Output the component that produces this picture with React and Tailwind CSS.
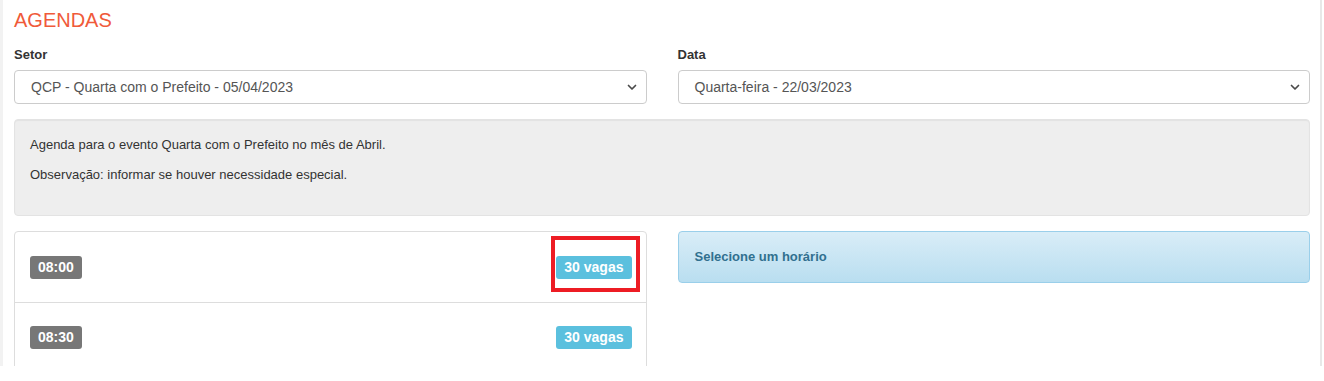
import React from 'react';

const ChevronDown = () => (
    <svg width="10" height="7" viewBox="0 0 10 7" className="shrink-0">
        <path d="M1.5 1.5 L5 5 L8.5 1.5" fill="none" stroke="#4a4a4a" strokeWidth="1.7" strokeLinecap="round" strokeLinejoin="round" />
    </svg>
);

const FakeSelect = ({ value }) => (
    <div className="h-[34px] flex items-center justify-between pl-[16px] pr-[9px] bg-white border border-[#cccccc] rounded-[4px] text-[14px] text-[#555555]">
        <span>{value}</span>
        <ChevronDown />
    </div>
);

const Field = ({ label, value }) => (
    <div className="flex flex-col">
        <label className="text-[13px] font-bold text-[#333333] leading-[18px] mb-[6px]">{label}</label>
        <FakeSelect value={value} />
    </div>
);

const slots = [
    { time: '08:00', vagas: 30, highlight: true },
    { time: '08:30', vagas: 30 },
];

export default function App() {
    return (
        <div className="w-[1324px] h-[381px] bg-white overflow-hidden" style={{ fontFamily: '"Liberation Sans", Arial, sans-serif' }}>
            <div className="h-[366px] flex overflow-hidden">
                <div className="w-[3px] bg-[#f2f2f2] shrink-0" />
                <div className="flex-1 pl-[11px] pr-[10px] overflow-hidden">
                    <h1 className="text-[20px] leading-[22px] text-[#f05a3a] mt-[9px] mb-[15px]">AGENDAS</h1>

                    <div className="grid grid-cols-2 gap-[31px]">
                        <Field label="Setor" value="QCP - Quarta com o Prefeito - 05/04/2023" />
                        <Field label="Data" value="Quarta-feira - 22/03/2023" />
                    </div>

                    {/* Info well */}
                    <div className="mt-[15px] bg-[#eeeeee] border border-[#e3e3e3] rounded-[4px] pt-[15px] pb-[20px] px-[15px] text-[13px] leading-[20px] text-[#333333] shadow-[inset_0_1px_1px_rgba(0,0,0,0.05)]">
                        <p className="mb-[10px]">Agenda para o evento Quarta com o Prefeito no mês de Abril.</p>
                        <p className="mb-[10px]">Observação: informar se houver necessidade especial.</p>
                    </div>

                    <div className="mt-[15px] grid grid-cols-2 gap-[31px] items-start">
                        {/* Slots list */}
                        <div className="border border-[#dddddd] rounded-t-[4px]">
                            {slots.map((s, i) => (
                                <div key={s.time} className={`relative h-[70px] flex items-center justify-between pl-[15px] pr-[14px] ${i > 0 ? 'border-t border-[#dddddd]' : ''}`}>
                                    <span className="bg-[#777777] text-white text-[14px] font-bold leading-[17px] px-[8px] py-[3px] rounded-[3px]">{s.time}</span>
                                    <span className="bg-[#5bc0de] text-white text-[14px] font-bold leading-[17px] px-[8px] py-[3px] rounded-[3px]">{s.vagas} vagas</span>
                                    {s.highlight && (
                                        <div className="absolute right-[6px] top-[4px] w-[89px] h-[56px] border-[4px] border-[#ed1c24]" />
                                    )}
                                </div>
                            ))}
                        </div>

                        {/* Alert */}
                        <div className="border border-[#9acfea] rounded-[4px] bg-gradient-to-b from-[#d9edf7] to-[#b9def0] px-[16px] py-[15px] text-[13px] leading-[20px] font-bold text-[#31708f]">
                            Selecione um horário
                        </div>
                    </div>
                </div>
                <div className="w-[2px] bg-[#e8e8e8] shrink-0" />
                <div className="w-[2px] bg-white shrink-0" />
            </div>
        </div>
    );
}
